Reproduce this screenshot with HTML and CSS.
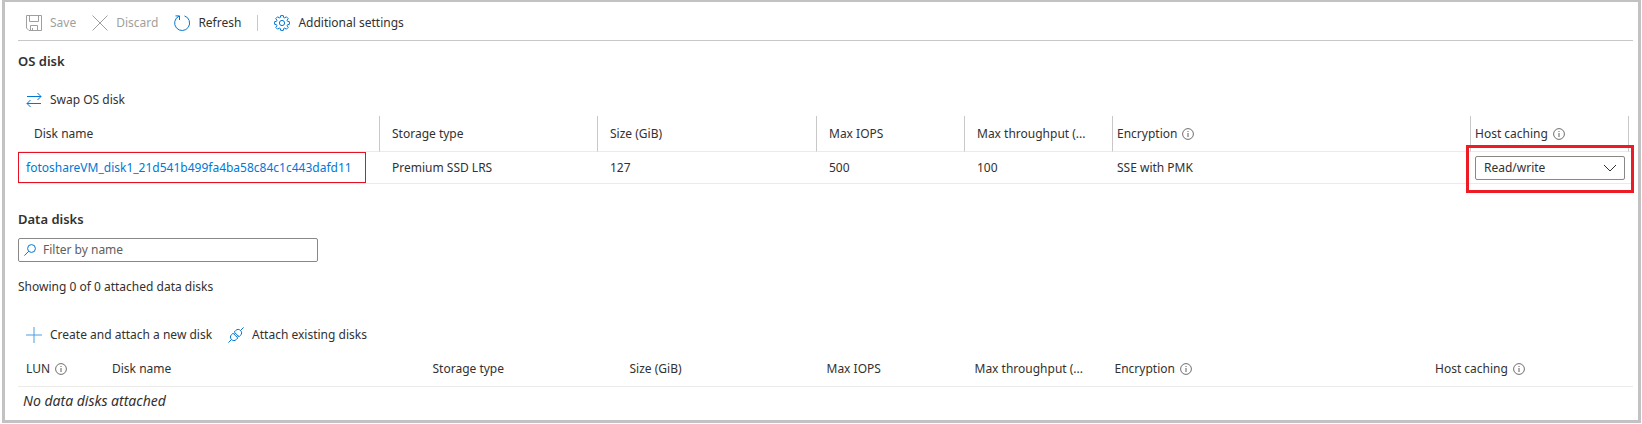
FILE: index.html
```html
<!DOCTYPE html>
<html lang="en">
<head>
    <meta charset="UTF-8">
    <title>Disks</title>
    <link rel="stylesheet" href="styles.css">
</head>
<body>
    <svg class="sprite" aria-hidden="true">
        <symbol id="icon-info" viewBox="0 0 12 12">
            <circle cx="6" cy="6" r="5.4" fill="none" stroke="currentColor" stroke-width="0.9"/>
            <path d="M6 5v4M6 3v1" fill="none" stroke="currentColor"/>
        </symbol>
    </svg>

    <main class="blade">
        <div class="toolbar">
            <button class="command" disabled>
                <svg class="icon" viewBox="0 0 16 16"><path d="M.5.5h15v15H3L.5 13zM3.500.5v6h9v-6M4.500 15.500v-5h7v5M6.500 15.500v-2.500"/></svg>
                Save
            </button>
            <button class="command" disabled>
                <svg class="icon" viewBox="0 0 16 16"><path d="M.5.5l15 15M15.500.5l-15 15"/></svg>
                Discard
            </button>
            <button class="command">
                <svg class="icon" viewBox="0 0 16 16"><path d="M10.500.9A7.500 7.500 0 1 1 5 1.200M1.500.9H5.500V5"/></svg>
                Refresh
            </button>
            <span class="divider"></span>
            <button class="command">
                <svg class="icon" viewBox="0 0 16 16"><path d="M6.700.6h2.600l.4 1.900 1 .4 1.700-1.100 1.800 1.800-1.100 1.700.4 1 1.900.4v2.600l-1.900.4-.4 1 1.100 1.700-1.800 1.800-1.700-1.100-1 .4-.4 1.900H6.700l-.4-1.900-1-.4-1.700 1.100-1.800-1.800 1.100-1.700-.4-1-1.900-.4V6.700l1.900-.4.4-1-1.100-1.700 1.800-1.800 1.700 1.100 1-.4z"/><circle cx="8" cy="8" r="2.600"/></svg>
                Additional settings
            </button>
        </div>

        <h2 class="section-title">OS disk</h2>
        <div class="command-bar">
            <button class="command">
                <svg class="icon" viewBox="0 0 16 16"><path d="M1 4.500h14M11.500 1l3.500 3.500L11.500 8M15 11.500H1M4.500 8L1 11.500 4.500 15"/></svg>
                Swap OS disk
            </button>
        </div>

        <table class="grid os-grid">
            <colgroup>
                <col class="os-name">
                <col class="os-type">
                <col class="os-size">
                <col class="os-limit">
                <col class="os-limit">
                <col>
                <col class="os-caching">
                <col class="os-end">
            </colgroup>
            <thead>
                <tr>
                    <th class="name-head">Disk name</th>
                    <th>Storage type</th>
                    <th>Size (GiB)</th>
                    <th>Max IOPS</th>
                    <th>Max throughput (...</th>
                    <th class="tight"><span class="with-info">Encryption <svg class="info"><use href="#icon-info"/></svg></span></th>
                    <th class="tight" id="caching-head"><span class="with-info">Host caching <svg class="info"><use href="#icon-info"/></svg></span></th>
                    <td></td>
                </tr>
            </thead>
            <tbody>
                <tr>
                    <td class="name-cell"><a class="disk-link" href="#">fotoshareVM_disk1_21d541b499fa4ba58c84c1c443dafd11</a></td>
                    <td>Premium SSD LRS</td>
                    <td>127</td>
                    <td>500</td>
                    <td>100</td>
                    <td class="tight">SSE with PMK</td>
                    <td class="tight">
                        <div class="caching">
                            <select class="caching-select" aria-labelledby="caching-head">
                                <option>None</option>
                                <option>Read-only</option>
                                <option selected>Read/write</option>
                            </select>
                            <svg class="chevron" viewBox="0 0 14 8"><path d="M1 1l6 6 6-6"/></svg>
                        </div>
                    </td>
                    <td></td>
                </tr>
            </tbody>
        </table>

        <h2 class="section-title data-title">Data disks</h2>
        <div class="filter">
            <label for="filter-name"><svg class="search" viewBox="0 0 12 12"><circle cx="7.500" cy="4.500" r="3.900"/><path d="M4.700 7.300L.4 11.600"/></svg></label>
            <input type="text" id="filter-name" aria-label="Filter by name" placeholder="Filter by name">
        </div>
        <p class="count">Showing 0 of 0 attached data disks</p>

        <div class="command-bar">
            <button class="command">
                <svg class="icon light" viewBox="0 0 16 16"><path d="M8 0v16M0 8h16"/></svg>
                Create and attach a new disk
            </button>
            <button class="command">
                <svg class="icon" viewBox="0 0 16 16"><path d="M.4 15.600L3.500 12.500M12.500 3.500L15.600.4M3.500 12.500c-1.500-1.500-1.500-3.300 0-4.800L5 6.200l4.800 4.800-1.500 1.500c-1.500 1.500-3.300 1.500-4.800 0zM12.500 3.500c1.500 1.500 1.500 3.300 0 4.800L11 9.800 6.200 5l1.500-1.500c1.500-1.500 3.300-1.500 4.800 0zM6.200 7.400L7.700 5.900M8.600 9.800l1.500-1.500"/></svg>
                Attach existing disks
            </button>
        </div>

        <table class="grid data-grid">
            <colgroup>
                <col class="data-lun">
                <col>
                <col class="data-type">
                <col class="data-type">
                <col class="data-iops">
                <col class="data-rate">
                <col>
                <col class="data-caching">
            </colgroup>
            <thead>
                <tr>
                    <th><span class="with-info">LUN <svg class="info"><use href="#icon-info"/></svg></span></th>
                    <th>Disk name</th>
                    <th>Storage type</th>
                    <th>Size (GiB)</th>
                    <th>Max IOPS</th>
                    <th>Max throughput (...</th>
                    <th><span class="with-info">Encryption <svg class="info"><use href="#icon-info"/></svg></span></th>
                    <th><span class="with-info">Host caching <svg class="info"><use href="#icon-info"/></svg></span></th>
                </tr>
            </thead>
            <tbody>
                <tr>
                    <td class="empty" colspan="8">No data disks attached</td>
                </tr>
            </tbody>
        </table>
    </main>
</body>
</html>
```

FILE: styles.css
```css
* {
    box-sizing: border-box;
}

body {
    margin: 0 1px 0 2px;
    background: #fff;
    color: #323130;
    font-family: "Noto Sans", "Open Sans", sans-serif;
    font-size: 12px;
    line-height: 20px;
}

button,
input,
select {
    font: inherit;
    color: inherit;
}

.sprite {
    display: none;
}

.blade {
    border: 3px solid #c2c2c2;
    border-top-width: 2px;
    padding: 0 5px 5px 13px;
}

/* Commands */
.toolbar {
    display: flex;
    align-items: center;
    gap: 16px;
    height: 39px;
    padding: 4px 0 0 8px;
    border-bottom: 1px solid #c8c8c8;
}

.command-bar {
    display: flex;
    align-items: center;
    gap: 16px;
    height: 35px;
    padding: 2px 0 0 8px;
}

.command {
    display: flex;
    align-items: center;
    gap: 8px;
    padding: 0;
    border: 0;
    background: none;
    white-space: nowrap;
}

.command:disabled {
    color: #a19f9d;
}

.icon {
    width: 16px;
    height: 16px;
    fill: none;
    stroke: #0078d4;
}

.command:disabled .icon {
    stroke: #a19f9d;
}

.light {
    opacity: 0.7;
}

.divider {
    width: 1px;
    height: 16px;
    background: #c8c8c8;
}

.section-title {
    margin: 10px 0;
    font-size: 13px;
    font-weight: 600;
}

.data-title {
    margin: 25px 0 9px;
}

/* Grids */
.grid {
    width: 100%;
    table-layout: fixed;
    border-collapse: separate;
    border-spacing: 0;
}

.grid th,
.grid td {
    padding: 0 8px;
    text-align: left;
    font-weight: normal;
    white-space: nowrap;
    border-bottom: 1px solid #edebe9;
}

.grid thead tr {
    height: 36px;
}

.grid tbody tr {
    height: 32px;
}

.os-grid th,
.os-grid td {
    padding: 0 12px;
}

.os-grid th {
    border-right: 1px solid #c8c8c8;
}

.os-grid .name-head {
    padding-left: 16px;
}

.os-grid .name-cell {
    padding: 0;
}

.os-grid .tight {
    padding: 0 4px;
}

.os-name { width: 362px; }
.os-type { width: 218px; }
.os-size { width: 219px; }
.os-limit { width: 148px; }
.os-caching { width: 158px; }
.os-end { width: 4px; }

.data-lun { width: 86px; }
.data-type { width: 197px; }
.data-iops { width: 148px; }
.data-rate { width: 140px; }
.data-caching { width: 206px; }

.with-info {
    display: flex;
    align-items: center;
    gap: 5px;
}

.info {
    width: 12px;
    height: 12px;
    color: #605e5c;
}

.disk-link {
    display: block;
    margin-right: 14px;
    padding: 5px 7px 4px;
    border: 1px solid #e81123;
    color: #0078d4;
    text-decoration: none;
}

.caching {
    position: relative;
    display: flex;
}

.caching::after {
    content: "";
    position: absolute;
    inset: -11px -9px -13px;
    border: 3px solid #ed1c24;
    pointer-events: none;
}

.caching-select {
    width: 100%;
    height: 24px;
    padding: 0 8px;
    border: 1px solid #8a8886;
    border-radius: 2px;
    background: #fff;
    appearance: none;
}

.chevron {
    position: absolute;
    top: 8px;
    right: 8px;
    width: 14px;
    height: 8px;
    fill: none;
    stroke: #323130;
    pointer-events: none;
}

/* Data disks */
.filter {
    display: flex;
    align-items: center;
    gap: 7px;
    width: 300px;
    height: 24px;
    padding: 0 5px;
    border: 1px solid #8a8886;
    border-radius: 2px;
}

.filter label {
    display: flex;
}

.filter input {
    flex: 1;
    min-width: 0;
    padding: 0;
    border: 0;
    outline: 0;
}

.filter input::placeholder {
    color: #605e5c;
    opacity: 1;
}

.search {
    width: 12px;
    height: 12px;
    fill: none;
    stroke: #0078d4;
}

.count {
    margin: 15px 0 19px;
}

.grid .empty {
    height: 28px;
    padding: 0 5px;
    border-bottom: 0;
    font-size: 14px;
    font-style: italic;
}

.data-grid tbody tr {
    height: 28px;
}
```
